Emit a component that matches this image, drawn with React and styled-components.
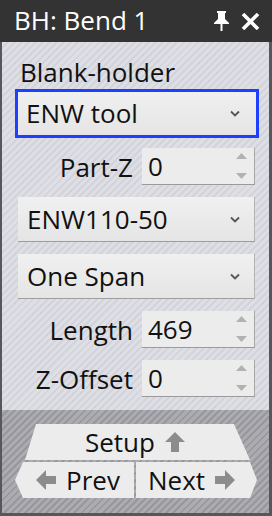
import React from 'react'
import styled, { createGlobalStyle } from 'styled-components'

const Global = createGlobalStyle`
  html, body { margin: 0; padding: 0; background: #55575c; }
  body { font-family: "Open Sans", "Noto Sans", sans-serif; }
  * { box-sizing: border-box; }
`

const Window = styled.div`
  width: 272px;
  height: 516px;
  display: flex;
  flex-direction: column;
  background: #55575c;
  border-left: 2px solid #55575c;
  border-right: 3px solid #55575c;
  border-bottom: 3px solid #55575c;
`

const TitleBar = styled.div`
  height: 42px;
  flex: 0 0 42px;
  margin: 0 -3px 0 -2px;
  padding: 0 12px 0 14px;
  background: #333333;
  display: flex;
  align-items: center;
  color: #ffffff;
`

const Title = styled.div`
  flex: 1;
  font-size: 26px;
  line-height: 1;
  padding-bottom: 3px;
`

const TitleIcons = styled.div`
  display: flex;
  align-items: center;
  gap: 11px;
`

const Body = styled.div`
  flex: 1;
  padding: 14px 14px 0 16px;
  display: flex;
  flex-direction: column;
  gap: 12px;
  background: repeating-linear-gradient(135deg, #dedee5 0 3px, #d3d3db 3px 5px);
`

const Group = styled.div`
  display: flex;
  flex-direction: column;
  gap: 3px;
`

const Label = styled.div`
  font-size: 26px;
  line-height: 32px;
  color: #111;
  padding-left: 2px;
`

const Select = styled.div`
  height: 45px;
  display: flex;
  align-items: center;
  justify-content: space-between;
  padding: 0 14px 0 9px;
  font-size: 26px;
  color: #111;
  background: linear-gradient(#f0f0f0, #e5e5e5);
  border-bottom: 1px solid #9e9e9e;
  border-right: 1px solid #b4b4b4;
  outline: ${p => (p.$focused ? '3px solid #1f3fff' : 'none')};
  outline-offset: ${p => (p.$focused ? '-1px' : '0')};
  margin: ${p => (p.$focused ? '0 -2px 0 -1px' : '0')};
  padding-right: ${p => (p.$focused ? '16px' : '14px')};
`

const FieldRow = styled.div`
  display: grid;
  grid-template-columns: 1fr 113px;
  gap: 9px;
  align-items: center;
`

const FieldLabel = styled.div`
  font-size: 26px;
  color: #111;
  text-align: right;
`

const Spin = styled.div`
  height: 37px;
  display: flex;
  align-items: center;
  justify-content: space-between;
  padding: 0 7px 0 6px;
  font-size: 26px;
  color: #111;
  background: #ececec;
  border-bottom: 1px solid #9a9a9a;
  border-right: 1px solid #a8a8a8;
`

const SpinArrows = styled.div`
  display: flex;
  flex-direction: column;
  gap: 14px;
`

const Nav = styled.div`
  flex: 0 0 103px;
  padding: 14px 0 0 0;
  display: flex;
  flex-direction: column;
  gap: 2px;
  background: repeating-linear-gradient(135deg, #ababb0 0 3px, #97979d 3px 5px);
`

const NavButton = styled.div`
  height: 36px;
  display: flex;
  align-items: center;
  justify-content: center;
  gap: 9px;
  font-size: 26px;
  color: #111;
  background: #ececec;
`

const SetupButton = styled(NavButton)`
  margin: 0 19px 0 23px;
  clip-path: polygon(11px 0, calc(100% - 16px) 0, 100% 100%, 0 100%);
  padding-right: 4px;
`

const NavRow = styled.div`
  display: grid;
  grid-template-columns: 119px 121px;
  gap: 2px;
  padding-left: 13px;
`

const PrevButton = styled(NavButton)`
  clip-path: polygon(8px 0, 100% 0, 100% 100%, 8px 100%, 0 50%);
  padding-left: 6px;
`

const NextButton = styled(NavButton)`
  clip-path: polygon(0 0, calc(100% - 7px) 0, 100% 50%, calc(100% - 7px) 100%, 0 100%);
  padding-right: 9px;
`

const Chevron = () => (
  <svg width="10" height="7" viewBox="0 0 10 7">
    <path d="M1 1.5 L5 5.5 L9 1.5" fill="none" stroke="#555" strokeWidth="1.8" />
  </svg>
)

const Triangle = ({ up }) => (
  <svg width="11" height="6" viewBox="0 0 11 6">
    <path d={up ? 'M0 6 L5.5 0 L11 6 Z' : 'M0 0 L5.5 6 L11 0 Z'} fill="#b2b2b2" />
  </svg>
)

const Arrow = ({ dir }) => {
  const rot = { up: -90, left: 180, right: 0 }[dir]
  return (
    <svg width="22" height="22" viewBox="0 0 22 22" style={{ transform: `rotate(${rot}deg)` }}>
      <path d="M1 7 H11 V1 L21 11 L11 21 V15 H1 Z" fill="#8c8c8c" />
    </svg>
  )
}

const PinIcon = () => (
  <svg width="17" height="20" viewBox="0 0 17 20">
    <path d="M4 0 H13 V2 H12 V8 L16 12 V13 H1 V12 L5 8 V2 H4 Z" fill="#fff" />
    <rect x="7.5" y="13" width="2" height="7" fill="#fff" />
  </svg>
)

const CloseIcon = () => (
  <svg width="19" height="17" viewBox="0 0 19 17">
    <path d="M2 1 L17 16 M17 1 L2 16" stroke="#fff" strokeWidth="3.6" />
  </svg>
)

const SpinField = ({ label, value }) => (
  <FieldRow>
    <FieldLabel>{label}</FieldLabel>
    <Spin>
      <span>{value}</span>
      <SpinArrows>
        <Triangle up />
        <Triangle />
      </SpinArrows>
    </Spin>
  </FieldRow>
)

export default function App() {
  return (
    <Window>
      <Global />
      <TitleBar>
        <Title>BH: Bend 1</Title>
        <TitleIcons>
          <PinIcon />
          <CloseIcon />
        </TitleIcons>
      </TitleBar>
      <Body>
        <Group>
          <Label>Blank-holder</Label>
          <Select $focused>
            <span>ENW tool</span>
            <Chevron />
          </Select>
        </Group>
        <SpinField label="Part-Z" value="0" />
        <Select>
          <span>ENW110-50</span>
          <Chevron />
        </Select>
        <Select>
          <span>One Span</span>
          <Chevron />
        </Select>
        <SpinField label="Length" value="469" />
        <SpinField label="Z-Offset" value="0" />
      </Body>
      <Nav>
        <SetupButton>
          <span>Setup</span>
          <Arrow dir="up" />
        </SetupButton>
        <NavRow>
          <PrevButton>
            <Arrow dir="left" />
            <span>Prev</span>
          </PrevButton>
          <NextButton>
            <span>Next</span>
            <Arrow dir="right" />
          </NextButton>
        </NavRow>
      </Nav>
    </Window>
  )
}
